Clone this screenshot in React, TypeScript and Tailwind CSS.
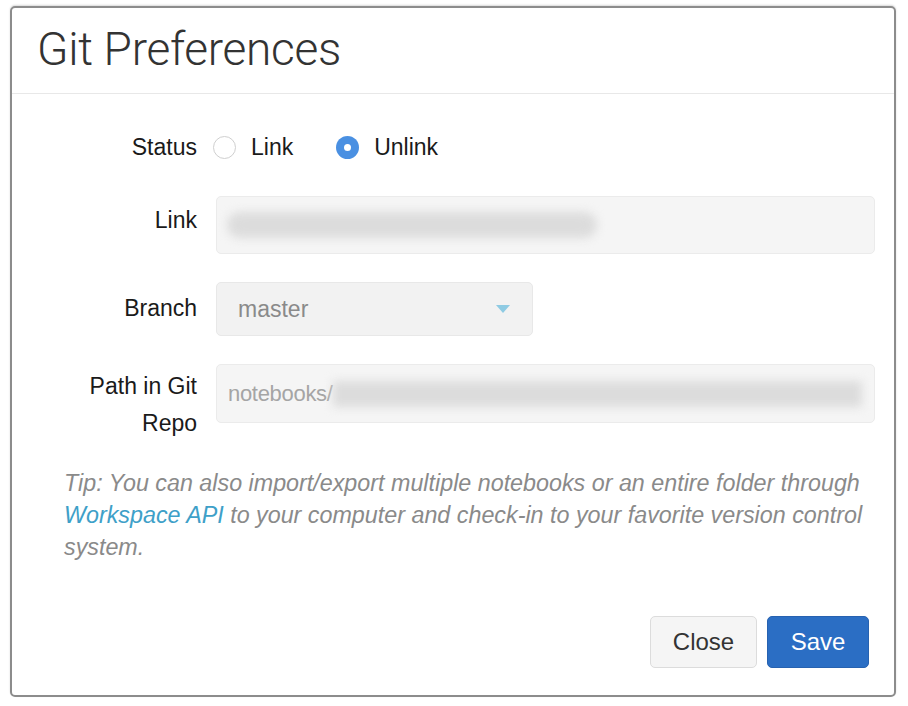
const sans = "font-['Liberation_Sans',Arial,sans-serif]";

function Radio({ checked, label }: { checked?: boolean; label: string }) {
    return (
        <label className="flex items-center gap-[15px]">
            {checked ? (
                <span className="w-[23px] h-[23px] rounded-full bg-[#4a90e2] flex items-center justify-center">
                    <span className="w-[7px] h-[7px] rounded-full bg-white"></span>
                </span>
            ) : (
                <span className="w-[23px] h-[23px] rounded-full border border-[#cfcfcf] bg-white"></span>
            )}
            <span className="text-[23px] text-[#1a1a1a]">{label}</span>
        </label>
    );
}

function Blur({ className }: { className: string }) {
    return <div className={"h-[26px] rounded-full bg-[#dcdcdc] blur-[5px] " + className}></div>;
}

export default function App() {
    return (
        <div className={`w-[908px] h-[706px] bg-white pt-[6px] pl-[10px] ${sans}`}>
            <div className="w-[886px] h-[691px] border-2 border-[#8c8c8c] rounded-[5px] shadow-[0_-1px_2px_rgba(0,0,0,0.15)] flex flex-col">
                <div className="h-[86px] border-b border-[#e8e8e8] pl-[25px] flex items-center">
                    <h1 className="font-['Roboto',sans-serif] font-light text-[46px] text-[#333] tracking-[-0.3px] pb-[2px]">
                        Git Preferences
                    </h1>
                </div>

                <div className="flex flex-col pr-[19px]">
                    <div className="grid grid-cols-[185px_1fr] gap-x-[19px] mt-[33px] items-center h-[40px]">
                        <div className="text-right text-[23px] text-[#1a1a1a]">Status</div>
                        <div className="flex items-center gap-[43px] -ml-[3px]">
                            <Radio label="Link" />
                            <Radio checked label="Unlink" />
                        </div>
                    </div>

                    <div className="grid grid-cols-[185px_1fr] gap-x-[19px] mt-[29px]">
                        <div className="text-right text-[23px] text-[#1a1a1a] pt-[7px]">Link</div>
                        <div className="h-[58px] rounded-[5px] bg-[#f5f5f5] border border-[#ebebeb] flex items-center px-[10px] overflow-hidden">
                            <Blur className="w-[370px]" />
                        </div>
                    </div>

                    <div className="grid grid-cols-[185px_1fr] gap-x-[19px] mt-[28px]">
                        <div className="text-right text-[23px] text-[#1a1a1a] pt-[9px]">Branch</div>
                        <div className="w-[317px] h-[54px] rounded-[5px] bg-[#f2f2f2] border border-[#e8e8e8] flex items-center justify-between pl-[21px] pr-[22px]">
                            <span className="text-[23px] text-[#8a8a8a]">master</span>
                            <svg width="14" height="8" viewBox="0 0 14 8">
                                <path d="M0 0 L14 0 L7 8 Z" fill="#8fcbe3" />
                            </svg>
                        </div>
                    </div>

                    <div className="grid grid-cols-[185px_1fr] gap-x-[19px] mt-[28px]">
                        <div className="text-right text-[23px] text-[#1a1a1a] leading-[37px] pt-[4px]">
                            Path in Git
                            <br />
                            Repo
                        </div>
                        <div className="h-[59px] rounded-[5px] bg-[#f5f5f5] border border-[#ebebeb] flex items-center pl-[11px] pr-[12px] overflow-hidden">
                            <span className="text-[22px] text-[#a5a5a5] shrink-0 tracking-[-0.3px]">notebooks/</span>
                            <Blur className="flex-1 rounded-none" />
                        </div>
                    </div>
                </div>

                <p className="mt-[25px] ml-[52px] mr-[26px] italic text-[23.3px] leading-[32px] text-[#8a8a8a]">
                    Tip: You can also import/export multiple notebooks or an entire folder through{" "}
                    <a className="text-[#3ea0c8]">Workspace API</a> to your computer and check-in to your favorite
                    version control system.
                </p>

                <div className="mt-auto mb-[27px] pr-[25px] flex justify-end gap-[10px]">
                    <button className="w-[107px] h-[52px] rounded-[5px] bg-[#f5f5f5] border border-[#dcdcdc] text-[24px] text-[#333]">
                        Close
                    </button>
                    <button className="w-[102px] h-[52px] rounded-[5px] bg-[#2b6ec4] border border-[#2762b0] text-[24px] text-white">
                        Save
                    </button>
                </div>
            </div>
        </div>
    );
}
